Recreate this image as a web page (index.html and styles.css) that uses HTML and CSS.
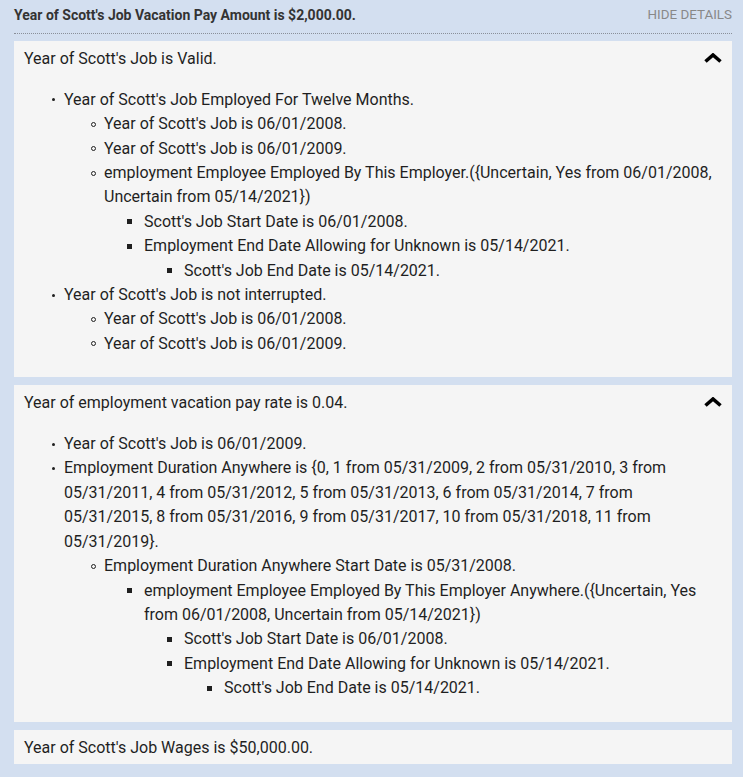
FILE: index.html
```html
<!DOCTYPE html>
<html>
<head>
<meta charset="utf-8">
<link rel="stylesheet" href="styles.css">
</head>
<body>
<div class="page">
  <div class="header">
    <span class="header-title">Year of Scott's Job Vacation Pay Amount is $2,000.00.</span>
    <span class="header-link">HIDE DETAILS</span>
  </div>

  <div class="card">
    <div class="card-title">
      <span>Year of Scott's Job is Valid.</span>
      <svg class="chevron" width="18" height="10" viewBox="0 0 18 10"><polyline points="1.5,8.5 9,2 16.5,8.5" fill="none" stroke="#000" stroke-width="3.6"/></svg>
    </div>
    <ul class="tree">
      <li>Year of Scott's Job Employed For Twelve Months.
        <ul>
          <li>Year of Scott's Job is 06/01/2008.</li>
          <li>Year of Scott's Job is 06/01/2009.</li>
          <li>employment Employee Employed By This Employer.({Uncertain, Yes from 06/01/2008, Uncertain from 05/14/2021})
            <ul>
              <li>Scott's Job Start Date is 06/01/2008.</li>
              <li>Employment End Date Allowing for Unknown is 05/14/2021.
                <ul>
                  <li>Scott's Job End Date is 05/14/2021.</li>
                </ul>
              </li>
            </ul>
          </li>
        </ul>
      </li>
      <li>Year of Scott's Job is not interrupted.
        <ul>
          <li>Year of Scott's Job is 06/01/2008.</li>
          <li>Year of Scott's Job is 06/01/2009.</li>
        </ul>
      </li>
    </ul>
  </div>

  <div class="card">
    <div class="card-title">
      <span>Year of employment vacation pay rate is 0.04.</span>
      <svg class="chevron" width="18" height="10" viewBox="0 0 18 10"><polyline points="1.5,8.5 9,2 16.5,8.5" fill="none" stroke="#000" stroke-width="3.6"/></svg>
    </div>
    <ul class="tree">
      <li>Year of Scott's Job is 06/01/2009.</li>
      <li>Employment Duration Anywhere is {0, 1 from 05/31/2009, 2 from 05/31/2010, 3 from 05/31/2011, 4 from 05/31/2012, 5 from 05/31/2013, 6 from 05/31/2014, 7 from 05/31/2015, 8 from 05/31/2016, 9 from 05/31/2017, 10 from 05/31/2018, 11 from 05/31/2019}.
        <ul>
          <li>Employment Duration Anywhere Start Date is 05/31/2008.
            <ul>
              <li>employment Employee Employed By This Employer Anywhere.({Uncertain, Yes from 06/01/2008, Uncertain from 05/14/2021})
                <ul>
                  <li>Scott's Job Start Date is 06/01/2008.</li>
                  <li>Employment End Date Allowing for Unknown is 05/14/2021.
                    <ul>
                      <li>Scott's Job End Date is 05/14/2021.</li>
                    </ul>
                  </li>
                </ul>
              </li>
            </ul>
          </li>
        </ul>
      </li>
    </ul>
  </div>

  <div class="card">
    <div class="card-title">
      <span>Year of Scott's Job Wages is $50,000.00.</span>
    </div>
  </div>
</div>
</body>
</html>
```

FILE: styles.css
```css
html, body {
  margin: 0;
  padding: 0;
  background: #d3dff0;
}
body {
  font-family: Roboto, "Liberation Sans", Arial, sans-serif;
  color: #1f1f1f;
}
.page {
  padding: 0 11px 12px 14px;
}
.header {
  display: flex;
  justify-content: space-between;
  align-items: center;
  padding: 5px 0 8px;
  line-height: 20px;
  border-bottom: 1px dotted #8a8f99;
  margin-bottom: 7px;
}
.header-title {
  font-weight: bold;
  font-size: 14px;
  color: #333;
}
.header-link {
  font-size: 13.4px;
  color: #888;
  text-transform: uppercase;
}
.card {
  background: #f5f5f5;
  padding: 6px 10px 4px;
  margin-bottom: 8px;
  font-size: 16px;
  line-height: 24.4px;
}
.card-title {
  display: flex;
  justify-content: space-between;
  align-items: center;
}
.chevron {
  display: block;
  margin-top: -2px;
}
.tree {
  margin: 16.4px 0 17px;
  padding-left: 40px;
}
.tree ul {
  margin: 0;
  padding-left: 40px;
}
.tree li {
  list-style: none;
  position: relative;
}
.tree li::before {
  content: "";
  position: absolute;
  left: -12px;
  top: 10.5px;
  width: 3px;
  height: 3px;
  border-radius: 50%;
  background: #1f1f1f;
}
.tree ul li::before {
  left: -13px;
  top: 9.5px;
  width: 3px;
  height: 3px;
  background: transparent;
  border: 1px solid #1f1f1f;
}
.tree ul ul li::before {
  left: -17px;
  top: 9.5px;
  width: 5px;
  height: 5px;
  border: 0;
  border-radius: 0;
  background: #1f1f1f;
}
```
